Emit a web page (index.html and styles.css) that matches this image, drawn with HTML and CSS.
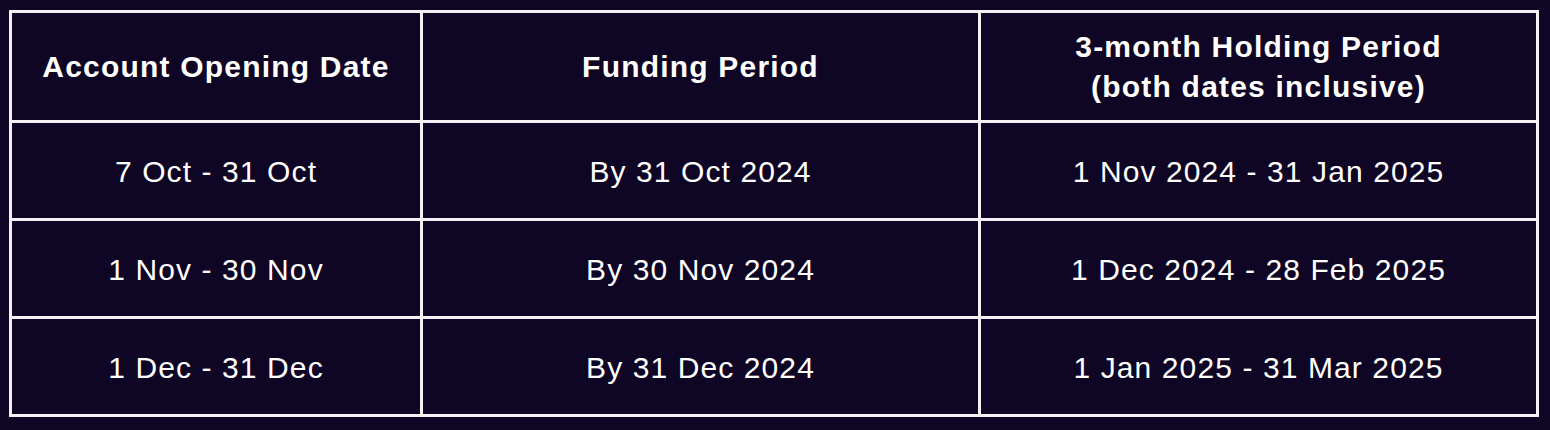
FILE: index.html
```html
<!DOCTYPE html>
<html lang="en">
<head>
<meta charset="utf-8">
<title>Holding Period Table</title>
<link rel="stylesheet" href="styles.css">
</head>
<body>
<div class="wrap">
<table class="periods">
  <colgroup>
    <col class="c1">
    <col class="c2">
    <col class="c3">
  </colgroup>
  <thead>
    <tr>
      <th>Account Opening Date</th>
      <th>Funding Period</th>
      <th>3-month Holding Period<br>(both dates inclusive)</th>
    </tr>
  </thead>
  <tbody>
    <tr>
      <td>7 Oct - 31 Oct</td>
      <td>By 31 Oct 2024</td>
      <td>1 Nov 2024 - 31 Jan 2025</td>
    </tr>
    <tr>
      <td>1 Nov - 30 Nov</td>
      <td>By 30 Nov 2024</td>
      <td>1 Dec 2024 - 28 Feb 2025</td>
    </tr>
    <tr>
      <td>1 Dec - 31 Dec</td>
      <td>By 31 Dec 2024</td>
      <td>1 Jan 2025 - 31 Mar 2025</td>
    </tr>
  </tbody>
</table>
</div>
</body>
</html>
```
FILE: styles.css
```css
html, body {
  margin: 0;
  padding: 0;
  background: #0f0524;
}
.wrap {
  padding: 10px 11px 0 9px;
}
.periods {
  width: 1530px;
  border-collapse: collapse;
  font-family: "Liberation Sans", Arial, sans-serif;
  color: #ffffff;
  font-size: 30px;
  letter-spacing: 1.1px;
}
.c1 { width: 411px; }
.c2 { width: 558px; }
.c3 { width: 558px; }
.periods th,
.periods td {
  border: 3px solid #f2f2f4;
  text-align: center;
  vertical-align: middle;
  padding: 0;
}
.periods th {
  font-weight: bold;
  height: 107px;
  line-height: 40px;
  letter-spacing: 1.2px;
}
.periods td {
  height: 92px;
  line-height: 34px;
  padding-top: 3px;
}
```
